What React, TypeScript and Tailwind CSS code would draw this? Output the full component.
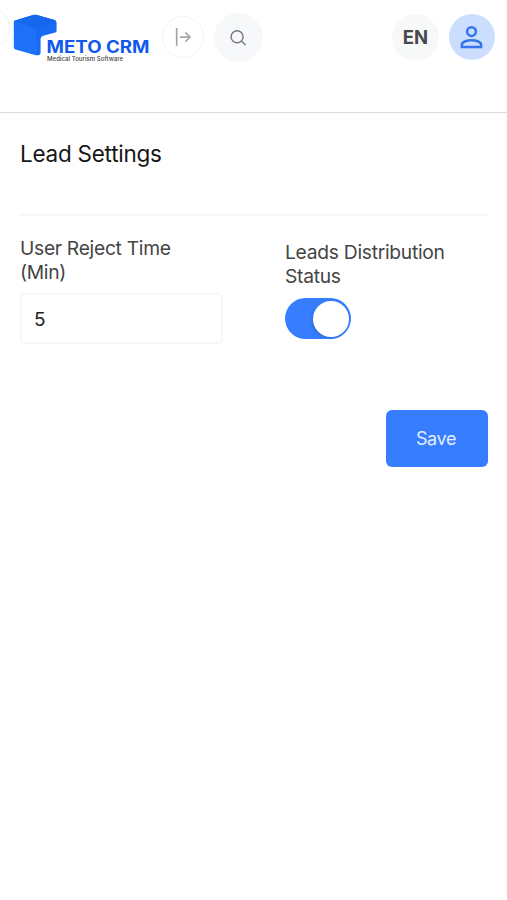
import { useState } from "react";

function Logo() {
  return (
    <svg width="138" height="52" viewBox="0 0 138 52" role="img" aria-label="Meto CRM">
      <defs>
        <linearGradient id="cube-top" x1="0" y1="0" x2="1" y2="0.3">
          <stop offset="0" stopColor="#186cf0" />
          <stop offset="1" stopColor="#1463ec" />
        </linearGradient>
        <linearGradient id="cube-side" x1="0" y1="0" x2="0.5" y2="1">
          <stop offset="0" stopColor="#1a70f6" />
          <stop offset="1" stopColor="#2072fa" />
        </linearGradient>
      </defs>
      <path d="M2 6.4 20 1.1Q22 .5 24 1.1L41.5 6Q43.5 6.6 43.5 8.5V17Q43.5 18.2 42 18.6L30 21.8Q27.5 22.5 27.5 25V38.5Q27.5 41.4 24 41.3Q22.8 41.2 21 40.7L2.5 35.6Q.8 35.1.8 33.5V8Q.8 6.7 2 6.4Z" fill="url(#cube-side)" />
      <path d="M2 6.4 20 1.1Q22 .5 24 1.1L41.5 6Q43.2 6.5 42.8 7.8L25 13.2Q22.5 13.9 20 13.2L1.2 7.6Z" fill="url(#cube-top)" />
      <path d="M22.5 13.7 25 13.2 42.8 7.8Q43.5 7.5 43.5 8.5V17Q43.5 18.2 42 18.6L30 21.8Q27.5 22.5 27.5 25V38.5Q27.5 41.2 24.5 41.3Z" fill="#1160ee" opacity="0.4" />
      <text x="33.5" y="38.8" textLength="103" lengthAdjust="spacingAndGlyphs" className="fill-[#1259ea] font-['Inter'] text-[16.8px] font-bold">METO CRM</text>
      <text x="34" y="47.3" textLength="76" lengthAdjust="spacingAndGlyphs" className="fill-[#444444] font-['Inter'] text-[6px] font-medium">Medical Tourism Software</text>
    </svg>
  );
}

function Header() {
  return (
    <header className="relative flex h-[113px] items-start overflow-hidden border-b border-[#dcdcdc] pl-[13px] pr-[12px]">
      <span className="absolute -left-[31px] top-[7px] size-[41px] rounded-full border border-[#f2f2f3]" />
      <div className="mt-[13.5px] w-[138px] shrink-0">
        <Logo />
      </div>
      <button aria-label="Expand menu" className="ml-[11px] mt-[16px] flex size-[42px] items-center justify-center rounded-full border-[1.5px] border-[#f3f3f4]">
        <svg width="18" height="20" viewBox="0 0 18 20" fill="none" stroke="#a6a6a8">
          <path d="M2.7 1V19" strokeWidth="1.7" />
          <path d="M6 10.1H16M11.3 5.4 16 10.1 11.3 14.8" strokeWidth="1.6" />
        </svg>
      </button>
      <button aria-label="Search" className="ml-[10px] mt-[13px] flex size-[49px] items-center justify-center rounded-full bg-[#f7f8f9]">
        <svg width="18" height="18" viewBox="0 0 18 18" fill="none" stroke="#77787c" strokeWidth="1.4" className="-translate-x-[0.5px]">
          <circle cx="7.6" cy="7.7" r="6" />
          <path d="m12 12.1 4.2 4.2" />
        </svg>
      </button>
      <button className="ml-auto mt-[14px] flex size-[47px] items-center justify-center rounded-full bg-[#f7f8f8] pt-px text-[18.5px] font-bold text-[#47484a]">
        EN
      </button>
      <button aria-label="Profile" className="ml-[10px] mt-[14px] flex size-[46px] items-center justify-center rounded-full bg-[#cbdefd]">
        <svg width="24" height="24" viewBox="0 0 24 24" fill="none" stroke="#3575ee" strokeWidth="2.5">
          <circle cx="11.5" cy="6.6" r="4.4" />
          <path d="M1.9 22V19.6C1.9 16.6 7.9 15.2 11.5 15.2S21.1 16.6 21.1 19.6V22Z" />
        </svg>
      </button>
    </header>
  );
}

export default function App() {
  const [rejectTime, setRejectTime] = useState("5");
  const [enabled, setEnabled] = useState(true);

  return (
    <div className="min-h-screen bg-white font-['Inter',sans-serif]">
      <Header />

      <main className="pl-[20px] pr-[19px] pt-[25px]">
        <h1 className="text-[22.5px] leading-8 tracking-[-0.25px] text-[#161616]">Lead Settings</h1>
        <hr className="mt-[44px] border-t-2 border-[#f8f8f8]" />

        <form onSubmit={(e) => e.preventDefault()}>
          <div className="mt-[20px] flex items-start">
            <div className="w-[203px]">
              <label htmlFor="rejectTime" className="block text-[19.25px] leading-6 tracking-[-0.3px] text-[#444444]">
                User Reject Time
                <br />
                (Min)
              </label>
              <input
                id="rejectTime"
                value={rejectTime}
                onChange={(e) => setRejectTime(e.target.value)}
                className="mt-[9px] block h-[51px] w-full rounded-[5px] border-2 border-[#f6f6f7] px-[12px] pt-[2px] text-[19px] text-[#222222] focus:outline-none"
              />
            </div>

            <div className="ml-[62px] mt-[4px]">
              <p className="text-[19.25px] leading-6 tracking-[-0.28px] text-[#444444]">
                Leads Distribution
                <br />
                Status
              </p>
              <button
                type="button"
                role="switch"
                aria-checked={enabled}
                aria-label="Leads Distribution Status"
                onClick={() => setEnabled(!enabled)}
                className={`mt-[10px] flex h-[41px] w-[66px] items-center rounded-full px-[2.5px] ${enabled ? "justify-end bg-[#377dff]" : "justify-start bg-gray-200"}`}
              >
                <span className="size-[36px] rounded-full bg-white shadow-[-1px_1px_3px_rgba(0,0,0,0.15)]" />
              </button>
            </div>
          </div>

          <div className="mt-[66px] flex justify-end">
            <button type="submit" className="h-[57px] w-[102px] rounded-[6px] bg-[#377dff] pr-[2px] text-[18px] tracking-[-0.4px] text-[#e4edff]">
              Save
            </button>
          </div>
        </form>
      </main>
    </div>
  );
}
